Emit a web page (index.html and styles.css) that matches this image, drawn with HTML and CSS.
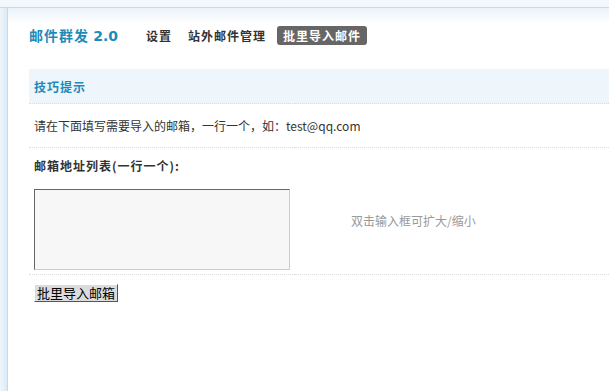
FILE: index.html
```html
<!DOCTYPE html>
<html lang="zh-CN">
<head>
    <meta charset="UTF-8">
    <title>邮件群发</title>
    <link rel="stylesheet" href="styles.css">
</head>
<body>
    <div class="topbar"></div>
    <div class="frame">
        <div class="sidebar"></div>
        <div class="main">
            <div class="header">
                <h1>邮件群发 <span class="ver">2.0</span></h1>
                <ul class="nav">
                    <li><a href="#">设置</a></li>
                    <li><a href="#">站外邮件管理</a></li>
                    <li class="current"><a href="#">批里导入邮件</a></li>
                </ul>
            </div>

            <table class="tb">
                <tr class="tips">
                    <th colspan="2">技巧提示</th>
                </tr>
                <tr>
                    <td colspan="2" class="tip-text">请在下面填写需要导入的邮箱，一行一个，如：test@qq.com</td>
                </tr>
                <tr>
                    <td colspan="2" class="label">邮箱地址列表(一行一个):</td>
                </tr>
                <tr class="row-input">
                    <td class="cell-area"><textarea rows="6" cols="40"></textarea></td>
                    <td class="hint">双击输入框可扩大/缩小</td>
                </tr>
            </table>

            <div class="actions">
                <button type="button" class="btn">批里导入邮箱</button>
            </div>
        </div>
    </div>
</body>
</html>
```

FILE: styles.css
```css
body {
    margin: 0;
    font-family: "Noto Sans CJK SC", "DejaVu Sans", sans-serif;
    font-size: 12px;
    color: #333;
    background: #fff;
}
.topbar {
    height: 7px;
    background: #f3f8fc;
    border-bottom: 1px solid #c7dbe7;
}
.frame {
    display: flex;
    min-height: 383px;
}
.sidebar {
    width: 7px;
    background: linear-gradient(to right, #eef5fb, #dcebf6);
    border-right: 1px solid #c7dbe7;
}
.main {
    flex: 1;
    padding-left: 21px;
    background: linear-gradient(to bottom, #eaf3fa 0, #fff 16px);
}
.header {
    display: flex;
    align-items: center;
    height: 54px;
    margin-bottom: 7px;
}
.header h1 {
    margin: 0 23px 0 0;
    font-size: 14px;
    letter-spacing: 1px;
    color: #1d8bba;
    font-weight: bold;
    line-height: 20px;
}
.header h1 .ver {
    font-family: Verdana, "DejaVu Sans", sans-serif;
    letter-spacing: 0;
}
.nav {
    display: flex;
    gap: 7px;
    margin: 0;
    padding: 0;
    list-style: none;
}
.nav a {
    display: block;
    padding: 0 4px 0 5px;
    font-weight: bold;
    letter-spacing: 1px;
    color: #333;
    text-decoration: none;
    line-height: 19px;
    border-radius: 3px;
}
.nav .current a {
    padding: 0 6px 0 6px;
    background: #666;
    color: #fff;
}
.tb {
    width: 100%;
    border-collapse: collapse;
}
.tb th,
.tb td {
    text-align: left;
    padding: 0 5px;
    border-bottom: 1px dotted #ddd;
}
.tips th {
    height: 34px;
    background: #eef5fb;
    color: #1d8bba;
    font-weight: bold;
    letter-spacing: 1px;
}
.tip-text {
    height: 43px;
}
.tb td.label {
    height: 32px;
    padding-top: 9px;
    font-weight: bold;
    letter-spacing: 1px;
    border-bottom: none;
    vertical-align: top;
}
.row-input td {
    padding-top: 0;
    padding-bottom: 4px;
}
.cell-area {
    width: 256px;
}
textarea {
    display: block;
    width: 256px;
    height: 81px;
    box-sizing: border-box;
    margin: 0;
    background: #f7f7f7;
    border: 1px solid #ccc;
    border-top-color: #666;
    border-left-color: #666;
    resize: none;
}
.tb td.hint {
    padding-left: 56px;
    padding-top: 23px;
    vertical-align: top;
    color: #999;
}
.actions {
    padding: 9px 5px;
}
.btn {
    font-family: "Noto Sans CJK SC", sans-serif;
    font-size: 13px;
    line-height: 14px;
    padding: 1px 2px;
    color: #000;
    background: #dcdcdc;
    border: 1px solid;
    border-color: #fff #555 #555 #fff;
}
```
